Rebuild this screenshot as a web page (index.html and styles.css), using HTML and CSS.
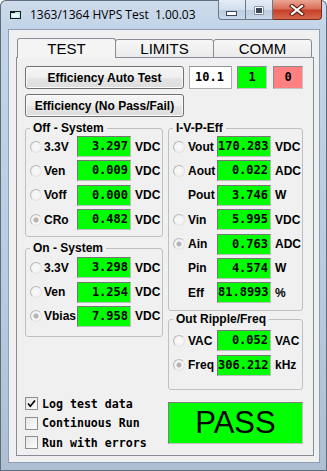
FILE: index.html
```html
<!DOCTYPE html>
<html lang="en">
<head>
	<meta charset="UTF-8">
	<title>1363/1364 HVPS Test</title>
	<link rel="stylesheet" href="styles.css">
</head>
<body>
<div class="window">
	<div class="titlebar">
		<svg class="appicon" width="13" height="11" viewBox="0 0 13 11">
			<rect x="1.5" y="2.5" width="10" height="7" fill="#bfeee8" stroke="#1a1a1a"/>
			<rect x="1" y="2" width="5" height="2" fill="#1a1a1a"/>
			<rect x="3" y="5" width="7" height="3" fill="#e8fbf8"/>
		</svg>
		<span class="caption">1363/1364 HVPS Test  1.00.03</span>
		<div class="capbtns">
			<div class="capbtn min">
				<svg width="14" height="8" viewBox="0 0 14 8"><rect x="1.5" y="2.5" width="10" height="4" fill="#fff" stroke="#3b4656"/></svg>
			</div>
			<div class="capbtn max">
				<svg width="14" height="12" viewBox="0 0 14 12"><rect x="2.5" y="2.5" width="9" height="8" fill="#3b4656"/><rect x="3.5" y="3.5" width="7" height="6" fill="none" stroke="#fff"/><rect x="5" y="6" width="4" height="2" fill="#3b4656"/></svg>
			</div>
			<div class="capbtn close">
				<svg width="16" height="12" viewBox="0 0 16 12">
					<path d="M3 2 L13 10 M13 2 L3 10" stroke="#5a1d12" stroke-width="4.2" stroke-linecap="square"/>
					<path d="M3 2 L13 10 M13 2 L3 10" stroke="#fff" stroke-width="2.2" stroke-linecap="square"/>
				</svg>
			</div>
		</div>
	</div>

	<div class="client">
		<div class="tabs">
			<div class="tabfill"></div>
			<div class="tab sel">TEST</div>
			<div class="tab">LIMITS</div>
			<div class="tab">COMM</div>
			<div class="tabfill grow"></div>
		</div>

		<div class="panel">
			<div class="toprow">
				<button class="btn">Efficiency Auto Test</button>
				<div class="entry">10.1</div>
				<div class="flag ok">1</div>
				<div class="flag bad">0</div>
			</div>
			<div class="toprow second">
				<button class="btn">Efficiency (No Pass/Fail)</button>
			</div>

			<div class="cols">
				<div class="col left">
					<fieldset class="grp grp-off">
						<legend>Off - System</legend>
						<div class="row"><span class="radio"></span><span class="lbl">3.3V</span><span class="val">3.297</span><span class="unit">VDC</span></div>
						<div class="row"><span class="radio"></span><span class="lbl">Ven</span><span class="val">0.009</span><span class="unit">VDC</span></div>
						<div class="row"><span class="radio"></span><span class="lbl">Voff</span><span class="val">0.000</span><span class="unit">VDC</span></div>
						<div class="row"><span class="radio on"></span><span class="lbl">CRo</span><span class="val">0.482</span><span class="unit">VDC</span></div>
					</fieldset>

					<fieldset class="grp grp-on">
						<legend>On - System</legend>
						<div class="row"><span class="radio"></span><span class="lbl">3.3V</span><span class="val">3.298</span><span class="unit">VDC</span></div>
						<div class="row"><span class="radio"></span><span class="lbl">Ven</span><span class="val">1.254</span><span class="unit">VDC</span></div>
						<div class="row"><span class="radio on"></span><span class="lbl">Vbias</span><span class="val">7.958</span><span class="unit">VDC</span></div>
					</fieldset>

					<div class="checks">
						<div class="chk"><span class="box"><svg width="11" height="11" viewBox="0 0 11 11"><path d="M2 5.5 L4.3 8.2 L9 2.5" fill="none" stroke="#000" stroke-width="1.7"/></svg></span>Log test data</div>
						<div class="chk"><span class="box"></span>Continuous Run</div>
						<div class="chk"><span class="box"></span>Run with errors</div>
					</div>
				</div>

				<div class="col right">
					<fieldset class="grp grp-ivp">
						<legend>I-V-P-Eff</legend>
						<div class="row"><span class="radio"></span><span class="lbl">Vout</span><span class="val">170.283</span><span class="unit">VDC</span></div>
						<div class="row"><span class="radio"></span><span class="lbl">Aout</span><span class="val">0.022</span><span class="unit">ADC</span></div>
						<div class="row"><span class="radio none"></span><span class="lbl">Pout</span><span class="val">3.746</span><span class="unit">W</span></div>
						<div class="row"><span class="radio"></span><span class="lbl">Vin</span><span class="val">5.995</span><span class="unit">VDC</span></div>
						<div class="row"><span class="radio on"></span><span class="lbl">Ain</span><span class="val">0.763</span><span class="unit">ADC</span></div>
						<div class="row"><span class="radio none"></span><span class="lbl">Pin</span><span class="val">4.574</span><span class="unit">W</span></div>
						<div class="row"><span class="radio none"></span><span class="lbl">Eff</span><span class="val">81.8993</span><span class="unit">%</span></div>
					</fieldset>

					<fieldset class="grp grp-rip">
						<legend>Out Ripple/Freq</legend>
						<div class="row"><span class="radio"></span><span class="lbl">VAC</span><span class="val">0.052</span><span class="unit">VAC</span></div>
						<div class="row"><span class="radio on"></span><span class="lbl">Freq</span><span class="val">306.212</span><span class="unit">kHz</span></div>
					</fieldset>

					<div class="pass">PASS</div>
				</div>
			</div>
		</div>
	</div>
</div>
</body>
</html>
```

FILE: styles.css
```css
body{margin:0;background:#fff;}
.window{width:327px;height:471px;box-sizing:border-box;overflow:hidden;border-radius:6px 6px 0 0;background:linear-gradient(180deg,#cddbeb 0,#c3d4e8 30px,#b9cbe0 60%,#aebfd3 100%);box-shadow:inset 0 0 0 1px #5e6d7e;}

/* title bar */
.titlebar{height:29px;display:flex;}
.appicon{margin:9px 0 0 9px;flex-shrink:0;}
.caption{margin:7px 0 0 8px;font:12px/16px "Open Sans",sans-serif;color:#000;white-space:pre;}
.capbtns{margin-left:auto;margin-right:5px;display:flex;height:20px;}
.capbtn{height:20px;box-sizing:border-box;display:flex;align-items:center;justify-content:center;border:1px solid #6a7889;border-top:none;}
.capbtn.min{width:28px;border-radius:0 0 0 4px;background:linear-gradient(180deg,#e4ecf5 0,#d2dfee 50%,#bccde2 51%,#c9d8ea 100%);padding-top:6px;}
.capbtn.max{width:27px;border-left:none;background:linear-gradient(180deg,#e4ecf5 0,#d2dfee 50%,#bccde2 51%,#c9d8ea 100%);}
.capbtn.close{width:49px;border-left:none;border-color:#7a2a1c;border-radius:0 0 4px 0;background:linear-gradient(180deg,#eba694 0,#d9705a 45%,#c7402a 55%,#d4684c 100%);}

/* client area */
.client{margin:0 7px 8px 8px;height:434px;box-sizing:border-box;border:1px solid #8e9fb3;background:#f0f0f0;padding:8px 5px 6px 7px;}

.tabs{display:flex;height:20px;}
.tabfill{width:1px;border-bottom:1px solid #898c95;box-sizing:border-box;}
.tabfill.grow{flex:1;}
.tab{width:99px;height:19px;margin-top:1px;box-sizing:border-box;border:1px solid #898c95;border-radius:3px 3px 0 0;background:linear-gradient(180deg,#f7f7f7,#ebebeb);font:15px/17px "Liberation Sans",Arial,sans-serif;color:#000;text-align:center;}
.tab+.tab{margin-left:-1px;}
.tab.sel{height:20px;margin-top:0;border-bottom:none;background:#f4f4f4;line-height:19px;}

.panel{height:398px;box-sizing:border-box;border:1px solid #898c95;border-top:none;padding:8px 10px 0 8px;background:#f0f0f0;}

.toprow{display:flex;height:23px;}
.toprow.second{margin-top:5px;}
.btn{width:159px;height:23px;margin:0;padding:0;border:1px solid #707070;border-radius:3px;background:linear-gradient(180deg,#f6f6f6 0,#efefef 50%,#e5e5e5 51%,#dddddd 100%);box-shadow:inset 0 0 0 1px #fbfbfb;font:bold 12px "Liberation Sans",Arial,sans-serif;color:#000;}
.entry{width:43px;margin-left:5px;box-sizing:border-box;border:1px solid #abadb3;border-top-color:#8f939b;background:#fff;padding-left:5px;font:bold 12px/21px "DejaVu Sans Mono",monospace;}
.flag{width:30px;box-sizing:border-box;border:1px solid #8a8a8a;border-right-color:#c4c4c4;border-bottom-color:#c4c4c4;text-align:center;font:bold 12px/21px "DejaVu Sans Mono",monospace;}
.flag.ok{margin-left:5px;background:#00ff00;}
.flag.bad{margin-left:6px;background:#ff8080;}

.cols{display:flex;margin-top:4px;}
.col.left{width:138px;}
.col.right{width:135px;margin-left:5px;}

/* group boxes */
.grp{margin:0;padding:1px 0 6px 4px;border:1px solid #bcc1c6;border-radius:3px;min-width:0;}
.grp legend{padding:0 3px;margin:0;font:bold 12px/14px "Liberation Sans",Arial,sans-serif;color:#000;}
.grp-on{margin-top:4px;padding:2px 0 9px 4px;}
.grp-ivp{padding:1px 0 7px 4px;}
.grp-rip{margin-top:1px;padding:4px 0 13px 4px;}

.row{display:flex;align-items:center;height:21px;}
.row+.row{margin-top:3.4px;}
.radio{width:12px;height:12px;box-sizing:border-box;flex-shrink:0;border-radius:50%;border:1px solid;border-color:#b8b8b8 #e4e4e4 #e4e4e4 #b8b8b8;background:radial-gradient(circle,#fafafa 0,#eeeeee 100%);margin-right:2px;}
.radio.on{background:radial-gradient(circle,#ababab 0,#b6b6b6 2px,#f4f4f4 3px,#eeeeee 100%);}
.radio.none{visibility:hidden;}
.right .radio{margin-right:3px;}
.lbl{width:33px;flex-shrink:0;font:bold 12px "Liberation Sans",Arial,sans-serif;color:#000;white-space:nowrap;}
.right .lbl{width:29px;}
.val{width:54px;height:21px;box-sizing:border-box;flex-shrink:0;border:1px solid #777;border-right-color:#bdbdbd;border-bottom-color:#bdbdbd;background:#00ff00;text-align:right;padding-right:2px;font:bold 12px/19px "DejaVu Sans Mono",monospace;color:#000;}
.unit{margin-left:4px;font:bold 12px "Liberation Sans",Arial,sans-serif;color:#000;white-space:nowrap;}

.checks{margin-top:58px;}
.chk{display:flex;align-items:center;height:18px;font:bold 11.6px "DejaVu Sans Mono",monospace;color:#000;}
.chk+.chk{margin-top:1.5px;}
.box{width:13px;height:13px;box-sizing:border-box;border:1px solid #8e8f8f;background:linear-gradient(135deg,#e6e6e6,#fcfcfc);margin-right:4px;display:flex;align-items:center;justify-content:center;}

.pass{margin-top:12px;height:42px;box-sizing:border-box;border:1px solid #7f7f7f;border-right-color:#c2c2c2;border-bottom-color:#c2c2c2;background:#00ff00;text-align:center;font:31px/40px "Liberation Sans",Arial,sans-serif;color:#000;}
```
